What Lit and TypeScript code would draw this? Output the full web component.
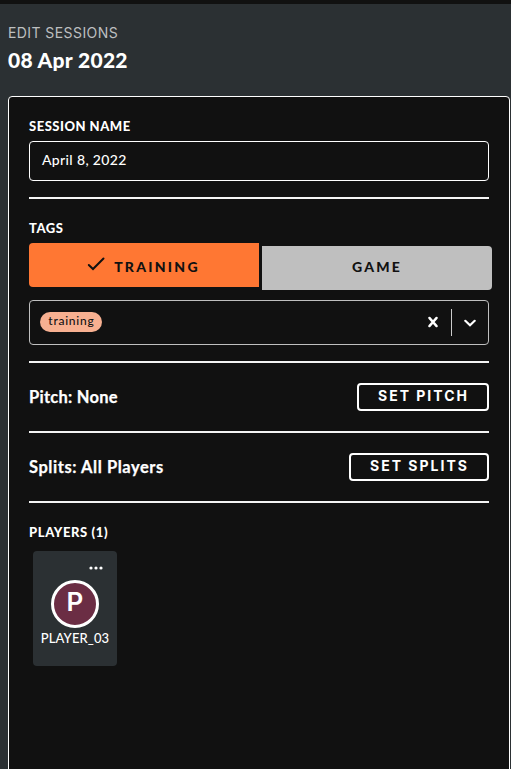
import { LitElement, html, css } from "lit";
import { customElement, property } from "lit/decorators.js";

@customElement("player-card")
class PlayerCard extends LitElement {
  @property() name = "";

  static styles = css`
    :host { display: flex; flex-direction: column; align-items: center; width: 84px; height: 115px; border-radius: 4px; background: #2b3033; }
    .menu { align-self: flex-end; display: block; margin: 15px 14px 0 0; }
    .avatar { box-sizing: border-box; width: 48px; height: 48px; margin-top: 10px; border: 3px solid #fff; border-radius: 50%; background: #6b2d44; font-size: 26px; font-weight: 600; line-height: 37px; text-align: center; font-family: Inter, sans-serif; }
    .name { font-size: 13px; line-height: 20px; letter-spacing: 0.1px; white-space: nowrap; font-weight: 500; }
  `;

  render() {
    return html`
      <svg class="menu" width="14" height="4" viewBox="0 0 14 4" fill="#fff">
        <circle cx="2" cy="2" r="1.6" /><circle cx="7" cy="2" r="1.6" /><circle cx="12" cy="2" r="1.6" />
      </svg>
      <div class="avatar">${this.name.charAt(0)}</div>
      <div class="name">${this.name}</div>
    `;
  }
}

@customElement("app-root")
class AppRoot extends LitElement {
  static styles = css`
    :host { display: flex; flex-direction: column; box-sizing: border-box; height: 769px; overflow: hidden; border-top: 4px solid #111; background: #2b3033; color: #fff; font-family: Lato, sans-serif; }
    * { box-sizing: border-box; }
    header { height: 92px; padding: 19px 8px 0; flex: none; }
    .eyebrow { font-family: Inter, sans-serif; font-size: 14px; line-height: 20px; letter-spacing: 0.42px; color: #bdbfc0; }
    h1 { margin: 3px 0 0; font-size: 21px; line-height: 28px; font-weight: 900; letter-spacing: 0.3px; }
    .panel { flex: none; height: 700px; margin: 0 1px 0 8px; padding: 19px 20px 0; border: 1px solid #fff; border-radius: 4px; background: #111; }
    .label { font-size: 13px; line-height: 20px; font-weight: 900; white-space: nowrap; letter-spacing: 0.5px; }
    .input { height: 40px; margin-top: 5px; padding-left: 12px; border: 1px solid #fff; border-radius: 4px; font-size: 14px; line-height: 35px; font-weight: 500; letter-spacing: 0.35px; }
    .rule { height: 2px; background: #f4f4f4; }
    .after-input { margin: 16px 0 19px; }
    .toggles { display: flex; gap: 3px; width: 463px; margin-top: 5px; }
    .toggle { display: flex; align-items: center; justify-content: center; width: 230px; height: 44px; color: #111; font-size: 14px; font-weight: 900; letter-spacing: 2.25px; line-height: 20px; }
    .on { background: #ff7733; border-radius: 4px 0 0 4px; }
    .on .word { margin-top: 4px; }
    .check { margin: -2px 9px 0 -1px; }
    .off { margin-top: 3px; background: #bfbfbf; border-radius: 0 4px 4px 0; }
    .off .word { margin-top: -2px; }
    .select { display: flex; align-items: center; height: 45px; margin-top: 10px; padding: 0 12px 0 10px; border: 1px solid #bfbfbf; border-radius: 4px; }
    .chip { width: 62px; height: 20px; margin-top: -2px; border-radius: 10px; background: #f7b091; color: #111; font-size: 12px; font-weight: 500; line-height: 18px; letter-spacing: 0.75px; text-indent: 0.75px; text-align: center; }
    .clear { margin: -1px 0 0 auto; }
    .bar { width: 1px; height: 27px; margin: -1px 12px 0 12px; background: #ccc; }
    .after-select { margin-top: 16px; }
    .row { display: flex; justify-content: space-between; height: 68px; padding-top: 20px; }
    .value { margin-top: 1px; font-size: 16.5px; font-weight: 700; line-height: 26px; letter-spacing: 0.25px; -webkit-text-stroke: 0.25px #fff; white-space: nowrap; }
    .splits-value { letter-spacing: 0.55px; }
    .button { height: 28px; border: 2px solid #fff; border-radius: 4px; font-family: Inter, sans-serif; font-size: 14px; line-height: 22px; font-weight: 700; letter-spacing: 2px; text-indent: 1px; text-align: center; white-space: nowrap; }
    .pitch { width: 132px; }
    .splits { width: 140px; }
    .players { margin-top: 19px; letter-spacing: 0.6px; }
    .cards { display: flex; margin: 9px 0 0 4px; }
  `;

  render() {
    return html`
      <header>
        <div class="eyebrow">EDIT SESSIONS</div>
        <h1>08 Apr 2022</h1>
      </header>
      <main class="panel">
        <div class="label">SESSION NAME</div>
        <div class="input">April 8, 2022</div>
        <div class="rule after-input"></div>
        <div class="label">TAGS</div>
        <div class="toggles">
          <div class="toggle on">
            <svg class="check" width="18" height="14" viewBox="0 0 18 14" fill="none" stroke="#111" stroke-width="2" stroke-linecap="round">
              <path d="M1.8 8 6 12 16.5 1.5" />
            </svg>
            <span class="word">TRAINING</span>
          </div>
          <div class="toggle off"><span class="word">GAME</span></div>
        </div>
        <div class="select">
          <span class="chip">training</span>
          <svg class="clear" width="12" height="12" viewBox="0 0 12 12" fill="none" stroke="#fff" stroke-width="2.4" stroke-linecap="round">
            <path d="M2.4 1.9 9.6 10.1M9.6 1.9 2.4 10.1" />
          </svg>
          <div class="bar"></div>
          <svg width="12" height="8" viewBox="0 0 12 8" fill="none" stroke="#fff" stroke-width="2.2" stroke-linecap="round">
            <path d="M1.3 1.8 6 6.2 10.7 1.8" />
          </svg>
        </div>
        <div class="rule after-select"></div>
        <div class="row"><span class="value">Pitch: None</span><div class="button pitch">SET PITCH</div></div>
        <div class="rule"></div>
        <div class="row"><span class="value splits-value">Splits: All Players</span><div class="button splits">SET SPLITS</div></div>
        <div class="rule"></div>
        <div class="label players">PLAYERS (1)</div>
        <div class="cards"><player-card name="PLAYER_03"></player-card></div>
      </main>
    `;
  }
}
